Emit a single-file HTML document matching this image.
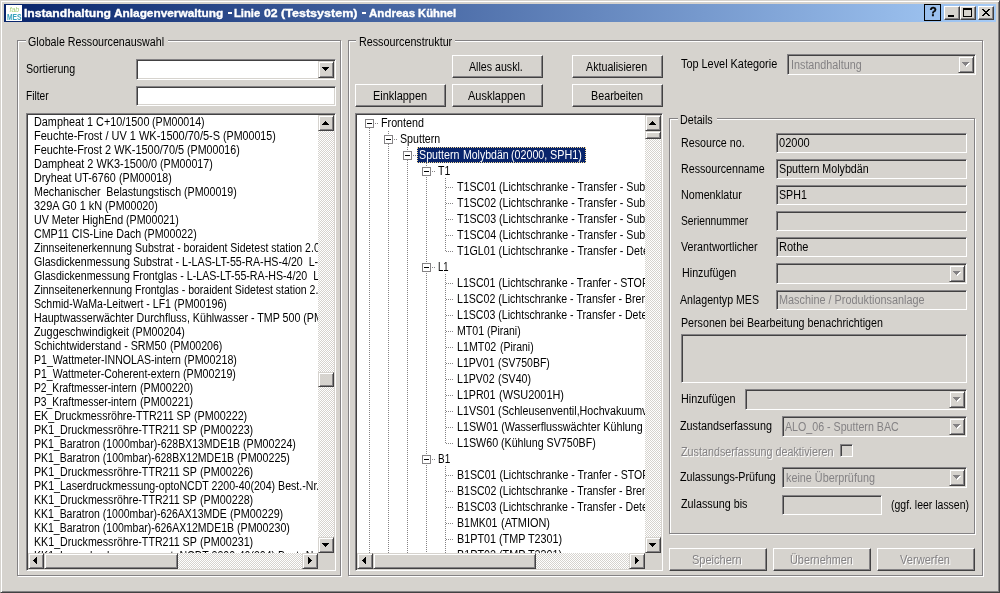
<!DOCTYPE html>
<html><head><meta charset="utf-8"><title>Instandhaltung Anlagenverwaltung</title>
<style>
html,body{margin:0;padding:0}
body{width:1000px;height:593px;background:#d6d3ce;position:relative;overflow:hidden;font-family:"Liberation Sans",sans-serif;font-size:12px;color:#000}
#w{position:absolute;left:0;top:0;width:1000px;height:593px;will-change:transform;-webkit-font-smoothing:antialiased}
.a{position:absolute;box-sizing:border-box}
.t{position:absolute;white-space:pre;transform-origin:0 0;transform:scaleX(0.885);line-height:14px;height:14px}
.dis{color:#848284;text-shadow:1px 1px 0 #fff}
.gry{color:#848284}
.sunk{position:absolute;box-sizing:border-box;border:1px solid;border-color:#848284 #fff #fff #848284;box-shadow:inset 1px 1px 0 #424142,inset -1px -1px 0 #d6d3ce}
.btn{position:absolute;box-sizing:border-box;border:1px solid;border-color:#fff #424142 #424142 #fff;box-shadow:inset -1px -1px 0 #848284;background:#d6d3ce}
.sbtn{position:absolute;box-sizing:border-box;border:1px solid;border-color:#d6d3ce #424142 #424142 #d6d3ce;box-shadow:inset 1px 1px 0 #fff,inset -1px -1px 0 #848284;background:#d6d3ce}
.grp{position:absolute;box-sizing:border-box;border:1px solid #848284;box-shadow:1px 1px 0 #fff,inset 1px 1px 0 #fff}
.glab{position:absolute;background:#d6d3ce;height:14px}
.trk{position:absolute;background:conic-gradient(#fff 25%,#d6d3ce 0 50%,#fff 0 75%,#d6d3ce 0) 0 0/2px 2px}
.clip{position:absolute;overflow:hidden;background:#fff}
.vd{position:absolute;width:1px;background:repeating-linear-gradient(to bottom,#848284 0 1px,transparent 1px 2px)}
.hd{position:absolute;height:1px;background:repeating-linear-gradient(to right,#848284 0 1px,transparent 1px 2px)}
.box{position:absolute;width:9px;height:9px;box-sizing:border-box;border:1px solid #848284;background:#fff}
.box:after{content:"";position:absolute;left:1px;top:3px;width:5px;height:1px;background:#000}
svg{position:absolute;overflow:visible}
</style></head>
<body>
<div id="w">
<div class="a" style="left:0;top:0;width:1000px;height:593px;border:1px solid;border-color:#d6d3ce #424142 #424142 #d6d3ce;box-shadow:inset 1px 1px 0 #fff,inset -1px -1px 0 #848284"></div>
<div class="a" style="left:4px;top:4px;width:992px;height:18px;background:linear-gradient(to right,#08246b,#a5cbf7)"></div>
<div class="a" style="left:6px;top:5px;width:16px;height:16px;background:#fff"></div>
<div class="t" style="left:9.5px;top:5.5px;font-size:7px;line-height:8px;height:8px;color:#a2cf78;font-style:italic;transform:none">fab</div>
<div class="t" style="left:7px;top:13px;font-size:8px;line-height:8px;height:8px;color:#38a3bd;font-weight:bold;transform:scaleX(.84) scaleY(1.1)">MES</div>
<div class="t" style="left:23.5px;top:6px;font-weight:bold;font-size:11px;color:#fff;-webkit-text-stroke:0.35px #fff;transform:scaleX(1.1038)">Instandhaltung</div>
<div class="t" style="left:114.1px;top:6px;font-weight:bold;font-size:11px;color:#fff;-webkit-text-stroke:0.35px #fff;transform:scaleX(1.0754)">Anlagenverwaltung</div>
<div class="t" style="left:234.2px;top:6px;font-weight:bold;font-size:11px;color:#fff;-webkit-text-stroke:0.35px #fff;transform:scaleX(1.0169)">Linie</div>
<div class="t" style="left:263.5px;top:6px;font-weight:bold;font-size:11px;color:#fff;-webkit-text-stroke:0.35px #fff;transform:scaleX(1.1116)">02</div>
<div class="t" style="left:281.1px;top:6px;font-weight:bold;font-size:11px;color:#fff;-webkit-text-stroke:0.35px #fff;transform:scaleX(1.1412)">(Testsystem)</div>
<div class="t" style="left:368.6px;top:6px;font-weight:bold;font-size:11px;color:#fff;-webkit-text-stroke:0.35px #fff;transform:scaleX(1.0497)">Andreas</div>
<div class="t" style="left:418.3px;top:6px;font-weight:bold;font-size:11px;color:#fff;-webkit-text-stroke:0.35px #fff;transform:scaleX(1.0249)">Kühnel</div>
<div class="a" style="left:228px;top:12px;width:4px;height:2px;background:#fff"></div>
<div class="a" style="left:362px;top:12px;width:4px;height:2px;background:#fff"></div>
<div class="a" style="left:924px;top:4px;width:17px;height:17px;border:1px solid #000"></div>
<div class="t" style="left:929.5px;top:5px;font-weight:bold;font-size:12px;-webkit-text-stroke:0.3px #000;transform:none">?</div>
<div class="btn" style="left:944px;top:6px;width:16px;height:14px;"></div>
<div class="btn" style="left:960px;top:6px;width:16px;height:14px;"></div>
<div class="btn" style="left:978px;top:6px;width:16px;height:14px;"></div>
<div class="a" style="left:948px;top:15px;width:6px;height:2px;background:#000"></div>
<div class="a" style="left:963px;top:8px;width:9px;height:9px;border:1px solid #000;border-top-width:2px"></div>
<svg style="left:982px;top:9px" width="8" height="7" shape-rendering="crispEdges"><path d="M0,0H2L4,2.5L6,0H8L5,3.5L8,7H6L4,4.5L2,7H0L3,3.5Z" fill="#000"/></svg>
<div class="grp" style="left:17px;top:40px;width:324px;height:536px;"></div>
<div class="glab" style="left:26px;top:34px;width:142px"></div>
<div class="t " style="left:28.0px;top:35px;transform:scaleX(0.8904);">Globale Ressourcenauswahl</div>
<div class="t " style="left:26.2px;top:62px;transform:scaleX(0.8886);">Sortierung</div>
<div class="t " style="left:26.2px;top:89px;transform:scaleX(0.8513);">Filter</div>
<div class="sunk" style="left:136px;top:59px;width:200px;height:21px;background:#fff;"></div>
<div class="sbtn" style="left:318px;top:61px;width:16px;height:17px;"></div>
<svg style="left:322px;top:67px" width="8" height="5" shape-rendering="crispEdges"><rect x="0" y="0" width="7" height="1" fill="#000"/><rect x="1" y="1" width="5" height="1" fill="#000"/><rect x="2" y="2" width="3" height="1" fill="#000"/><rect x="3" y="3" width="1" height="1" fill="#000"/></svg>
<div class="sunk" style="left:136px;top:86px;width:200px;height:20px;background:#fff;"></div>
<div class="sunk" style="left:26px;top:113px;width:310px;height:458px;background:#fff;"></div>
<div class="clip" style="left:28px;top:115px;width:290px;height:438px">
<div class="t " style="left:5.7px;top:0px;transform:scaleX(0.9033);">Dampheat 1 C+10/1500</div>
<div class="t " style="left:124.4px;top:0px;transform:scaleX(0.8861);">(PM00014)</div>
<div class="t " style="left:5.7px;top:14px;transform:scaleX(0.9149);">Feuchte-Frost / UV 1 WK-1500/70/5-S</div>
<div class="t " style="left:195.1px;top:14px;transform:scaleX(0.8878);">(PM00015)</div>
<div class="t " style="left:5.7px;top:28px;transform:scaleX(0.9111);">Feuchte-Frost 2 WK-1500/70/5</div>
<div class="t " style="left:159.1px;top:28px;transform:scaleX(0.8878);">(PM00016)</div>
<div class="t " style="left:5.7px;top:42px;transform:scaleX(0.9091);">Dampheat 2 WK3-1500/0</div>
<div class="t " style="left:132.1px;top:42px;transform:scaleX(0.8878);">(PM00017)</div>
<div class="t " style="left:5.7px;top:56px;transform:scaleX(0.8941);">Dryheat UT-6760</div>
<div class="t " style="left:90.7px;top:56px;transform:scaleX(0.8878);">(PM00018)</div>
<div class="t " style="left:5.7px;top:70px;transform:scaleX(0.8893);">Mechanischer  Belastungstisch</div>
<div class="t " style="left:156.1px;top:70px;transform:scaleX(0.8878);">(PM00019)</div>
<div class="t " style="left:5.7px;top:84px;transform:scaleX(0.9128);">329A G0 1 kN</div>
<div class="t " style="left:77.2px;top:84px;transform:scaleX(0.8878);">(PM00020)</div>
<div class="t " style="left:5.7px;top:98px;transform:scaleX(0.8916);">UV Meter HighEnd</div>
<div class="t " style="left:98.2px;top:98px;transform:scaleX(0.8878);">(PM00021)</div>
<div class="t " style="left:5.7px;top:112px;transform:scaleX(0.8897);">CMP11 CIS-Line Dach</div>
<div class="t " style="left:116.2px;top:112px;transform:scaleX(0.8878);">(PM00022)</div>
<div class="t " style="left:5.7px;top:126px;transform:scaleX(0.8759);">Zinnseitenerkennung Substrat - boraident Sidetest station 2.0 (PM00190)</div>
<div class="t " style="left:5.7px;top:140px;transform:scaleX(0.8883);">Glasdickenmessung Substrat - L-LAS-LT-55-RA-HS-4/20  L-LAS (PM00191)</div>
<div class="t " style="left:5.7px;top:154px;transform:scaleX(0.8876);">Glasdickenmessung Frontglas - L-LAS-LT-55-RA-HS-4/20  L-LAS (PM00192)</div>
<div class="t " style="left:5.7px;top:168px;transform:scaleX(0.8753);">Zinnseitenerkennung Frontglas - boraident Sidetest station 2.0 (PM00193)</div>
<div class="t " style="left:5.7px;top:182px;transform:scaleX(0.8805);">Schmid-WaMa-Leitwert - LF1</div>
<div class="t " style="left:146.0px;top:182px;transform:scaleX(0.8911);">(PM00196)</div>
<div class="t " style="left:5.7px;top:196px;transform:scaleX(0.8887);">Hauptwasserwächter Durchfluss, Kühlwasser - TMP 500 (PM00200)</div>
<div class="t " style="left:5.7px;top:210px;transform:scaleX(0.9014);">Zuggeschwindigkeit</div>
<div class="t " style="left:104.0px;top:210px;transform:scaleX(0.8911);">(PM00204)</div>
<div class="t " style="left:5.7px;top:224px;transform:scaleX(0.8949);">Schichtwiderstand - SRM50</div>
<div class="t " style="left:141.5px;top:224px;transform:scaleX(0.881);">(PM00206)</div>
<div class="t " style="left:5.7px;top:238px;transform:scaleX(0.8799);">P1_Wattmeter-INNOLAS-intern</div>
<div class="t " style="left:155.9px;top:238px;transform:scaleX(0.8911);">(PM00218)</div>
<div class="t " style="left:5.7px;top:252px;transform:scaleX(0.8745);">P1_Wattmeter-Coherent-extern</div>
<div class="t " style="left:155.0px;top:252px;transform:scaleX(0.8911);">(PM00219)</div>
<div class="t " style="left:5.7px;top:266px;transform:scaleX(0.8563);">P2_Kraftmesser-intern</div>
<div class="t " style="left:111.8px;top:266px;transform:scaleX(0.8962);">(PM00220)</div>
<div class="t " style="left:5.7px;top:280px;transform:scaleX(0.8563);">P3_Kraftmesser-intern</div>
<div class="t " style="left:111.8px;top:280px;transform:scaleX(0.8962);">(PM00221)</div>
<div class="t " style="left:5.7px;top:294px;transform:scaleX(0.8884);">EK_Druckmessröhre-TTR211 SP</div>
<div class="t " style="left:165.8px;top:294px;transform:scaleX(0.8962);">(PM00222)</div>
<div class="t " style="left:5.7px;top:308px;transform:scaleX(0.8888);">PK1_Druckmessröhre-TTR211 SP</div>
<div class="t " style="left:171.8px;top:308px;transform:scaleX(0.8962);">(PM00223)</div>
<div class="t " style="left:5.7px;top:322px;transform:scaleX(0.8749);">PK1_Baratron (1000mbar)-628BX13MDE1B</div>
<div class="t " style="left:215.0px;top:322px;transform:scaleX(0.8911);">(PM00224)</div>
<div class="t " style="left:5.7px;top:336px;transform:scaleX(0.8742);">PK1_Baratron (100mbar)-628BX12MDE1B</div>
<div class="t " style="left:209.0px;top:336px;transform:scaleX(0.8911);">(PM00225)</div>
<div class="t " style="left:5.7px;top:350px;transform:scaleX(0.8888);">PK1_Druckmessröhre-TTR211 SP</div>
<div class="t " style="left:171.8px;top:350px;transform:scaleX(0.8962);">(PM00226)</div>
<div class="t " style="left:5.7px;top:364px;transform:scaleX(0.8825);">PK1_Laserdruckmessung-optoNCDT 2200-40(204) Best.-Nr.4120101 (PM00227)</div>
<div class="t " style="left:5.7px;top:378px;transform:scaleX(0.8888);">KK1_Druckmessröhre-TTR211 SP</div>
<div class="t " style="left:171.8px;top:378px;transform:scaleX(0.8962);">(PM00228)</div>
<div class="t " style="left:5.7px;top:392px;transform:scaleX(0.8732);">KK1_Baratron (1000mbar)-626AX13MDE</div>
<div class="t " style="left:201.8px;top:392px;transform:scaleX(0.8962);">(PM00229)</div>
<div class="t " style="left:5.7px;top:406px;transform:scaleX(0.8742);">KK1_Baratron (100mbar)-626AX12MDE1B</div>
<div class="t " style="left:209.0px;top:406px;transform:scaleX(0.8911);">(PM00230)</div>
<div class="t " style="left:5.7px;top:420px;transform:scaleX(0.8888);">KK1_Druckmessröhre-TTR211 SP</div>
<div class="t " style="left:171.8px;top:420px;transform:scaleX(0.8962);">(PM00231)</div>
<div class="t " style="left:5.7px;top:434px;transform:scaleX(0.8825);">KK1_Laserdruckmessung-optoNCDT 2200-40(204) Best.-Nr.4120101 (PM00232)</div>
</div>
<div class="trk" style="left:318px;top:115px;width:16px;height:438px;"></div>
<div class="sbtn" style="left:318px;top:115px;width:16px;height:16px;"></div>
<svg style="left:322px;top:121px" width="8" height="5" shape-rendering="crispEdges"><rect x="3" y="0" width="1" height="1" fill="#000"/><rect x="2" y="1" width="3" height="1" fill="#000"/><rect x="1" y="2" width="5" height="1" fill="#000"/><rect x="0" y="3" width="7" height="1" fill="#000"/></svg>
<div class="sbtn" style="left:318px;top:537px;width:16px;height:16px;"></div>
<svg style="left:322px;top:543px" width="8" height="5" shape-rendering="crispEdges"><rect x="0" y="0" width="7" height="1" fill="#000"/><rect x="1" y="1" width="5" height="1" fill="#000"/><rect x="2" y="2" width="3" height="1" fill="#000"/><rect x="3" y="3" width="1" height="1" fill="#000"/></svg>
<div class="sbtn" style="left:318px;top:372px;width:16px;height:15px;"></div>
<div class="trk" style="left:28px;top:553px;width:290px;height:16px;"></div>
<div class="sbtn" style="left:28px;top:553px;width:16px;height:16px;"></div>
<svg style="left:33px;top:557px" width="5" height="8" shape-rendering="crispEdges"><rect x="0" y="3" width="1" height="1" fill="#000"/><rect x="1" y="2" width="1" height="3" fill="#000"/><rect x="2" y="1" width="1" height="5" fill="#000"/><rect x="3" y="0" width="1" height="7" fill="#000"/></svg>
<div class="sbtn" style="left:302px;top:553px;width:16px;height:16px;"></div>
<svg style="left:308px;top:557px" width="5" height="8" shape-rendering="crispEdges"><rect x="0" y="0" width="1" height="7" fill="#000"/><rect x="1" y="1" width="1" height="5" fill="#000"/><rect x="2" y="2" width="1" height="3" fill="#000"/><rect x="3" y="3" width="1" height="1" fill="#000"/></svg>
<div class="sbtn" style="left:44px;top:553px;width:134px;height:16px;"></div>
<div class="a" style="left:318px;top:553px;width:16px;height:16px;background:#d6d3ce;"></div>
<div class="grp" style="left:348px;top:40px;width:635px;height:536px;"></div>
<div class="glab" style="left:356px;top:34px;width:99px"></div>
<div class="t " style="left:358.7px;top:35px;transform:scaleX(0.8958);">Ressourcenstruktur</div>
<div class="btn" style="left:452px;top:55px;width:91px;height:23px;"></div>
<div class="t " style="left:469.4px;top:60px;transform:scaleX(0.8865);">Alles auskl.</div>
<div class="btn" style="left:572px;top:55px;width:91px;height:23px;"></div>
<div class="t " style="left:586.3px;top:60px;transform:scaleX(0.8908);">Aktualisieren</div>
<div class="btn" style="left:355px;top:84px;width:91px;height:23px;"></div>
<div class="t " style="left:372.7px;top:89px;transform:scaleX(0.9111);">Einklappen</div>
<div class="btn" style="left:452px;top:84px;width:91px;height:23px;"></div>
<div class="t " style="left:468.2px;top:89px;transform:scaleX(0.9153);">Ausklappen</div>
<div class="btn" style="left:572px;top:84px;width:91px;height:23px;"></div>
<div class="t " style="left:590.6px;top:89px;transform:scaleX(0.8976);">Bearbeiten</div>
<div class="sunk" style="left:355px;top:113px;width:308px;height:458px;background:#fff;"></div>
<div class="clip" style="left:357px;top:115px;width:288px;height:438px">
<div class="vd" style="left:12px;top:13px;height:440px"></div>
<div class="vd" style="left:31px;top:16px;height:4px"></div>
<div class="vd" style="left:31px;top:29px;height:440px"></div>
<div class="vd" style="left:50px;top:32px;height:4px"></div>
<div class="vd" style="left:50px;top:45px;height:440px"></div>
<div class="vd" style="left:69px;top:48px;height:440px"></div>
<div class="box" style="left:8px;top:4px"></div>
<div class="hd" style="left:18px;top:8px;width:4px"></div>
<div class="t " style="left:23.6px;top:1px;transform:scaleX(0.8953);">Frontend</div>
<div class="box" style="left:27px;top:20px"></div>
<div class="hd" style="left:37px;top:24px;width:4px"></div>
<div class="t " style="left:43.2px;top:17px;transform:scaleX(0.8862);">Sputtern</div>
<div class="box" style="left:46px;top:36px"></div>
<div class="hd" style="left:56px;top:40px;width:4px"></div>
<div class="a" style="left:60px;top:32px;width:169px;height:16px;background:#08246b;outline:1px dotted #f7db94;outline-offset:-1px"></div>
<div class="t " style="left:62.2px;top:33px;transform:scaleX(0.8912);color:#fff;">Sputtern </div>
<div class="t " style="left:105.6px;top:33px;transform:scaleX(0.876);color:#fff;">Molybdän </div>
<div class="t " style="left:154.1px;top:33px;transform:scaleX(0.8902);color:#fff;">(02000, </div>
<div class="t " style="left:193.3px;top:33px;transform:scaleX(0.8997);color:#fff;">SPH1)</div>
<div class="box" style="left:65px;top:52px"></div>
<div class="hd" style="left:75px;top:56px;width:4px"></div>
<div class="t " style="left:81.2px;top:49px;transform:scaleX(0.8712);">T1</div>
<div class="hd" style="left:89px;top:72px;width:8px"></div>
<div class="t " style="left:100.0px;top:65px;transform:scaleX(0.8876);">T1SC01 (Lichtschranke - Transfer - Substrat)</div>
<div class="hd" style="left:89px;top:88px;width:8px"></div>
<div class="t " style="left:100.0px;top:81px;transform:scaleX(0.8876);">T1SC02 (Lichtschranke - Transfer - Substrat)</div>
<div class="hd" style="left:89px;top:104px;width:8px"></div>
<div class="t " style="left:100.0px;top:97px;transform:scaleX(0.8876);">T1SC03 (Lichtschranke - Transfer - Substrat)</div>
<div class="hd" style="left:89px;top:120px;width:8px"></div>
<div class="t " style="left:100.0px;top:113px;transform:scaleX(0.8876);">T1SC04 (Lichtschranke - Transfer - Substrat)</div>
<div class="hd" style="left:89px;top:136px;width:8px"></div>
<div class="t " style="left:100.0px;top:129px;transform:scaleX(0.8907);">T1GL01 (Lichtschranke - Transfer - Detektion)</div>
<div class="box" style="left:65px;top:148px"></div>
<div class="hd" style="left:75px;top:152px;width:4px"></div>
<div class="t " style="left:81.2px;top:145px;transform:scaleX(0.7942);">L1</div>
<div class="hd" style="left:89px;top:168px;width:8px"></div>
<div class="t " style="left:100.0px;top:161px;transform:scaleX(0.8866);">L1SC01 (Lichtschranke - Tranfer - STOP)</div>
<div class="hd" style="left:89px;top:184px;width:8px"></div>
<div class="t " style="left:100.0px;top:177px;transform:scaleX(0.8833);">L1SC02 (Lichtschranke - Transfer - Bremsen)</div>
<div class="hd" style="left:89px;top:200px;width:8px"></div>
<div class="t " style="left:100.0px;top:193px;transform:scaleX(0.8833);">L1SC03 (Lichtschranke - Transfer - Detektion)</div>
<div class="hd" style="left:89px;top:216px;width:8px"></div>
<div class="t " style="left:100.0px;top:209px;transform:scaleX(0.8868);">MT01</div>
<div class="t " style="left:130.4px;top:209px;transform:scaleX(0.8688);">(Pirani)</div>
<div class="hd" style="left:89px;top:232px;width:8px"></div>
<div class="t " style="left:100.0px;top:225px;transform:scaleX(0.8928);">L1MT02</div>
<div class="t " style="left:142.5px;top:225px;transform:scaleX(0.8688);">(Pirani)</div>
<div class="hd" style="left:89px;top:248px;width:8px"></div>
<div class="t " style="left:100.0px;top:241px;transform:scaleX(0.8805);">L1PV01</div>
<div class="t " style="left:140.8px;top:241px;transform:scaleX(0.8727);">(SV750BF)</div>
<div class="hd" style="left:89px;top:264px;width:8px"></div>
<div class="t " style="left:100.0px;top:257px;transform:scaleX(0.8805);">L1PV02</div>
<div class="t " style="left:140.8px;top:257px;transform:scaleX(0.8835);">(SV40)</div>
<div class="hd" style="left:89px;top:280px;width:8px"></div>
<div class="t " style="left:100.0px;top:273px;transform:scaleX(0.8855);">L1PR01</div>
<div class="t " style="left:141.6px;top:273px;transform:scaleX(0.911);">(WSU2001H)</div>
<div class="hd" style="left:89px;top:296px;width:8px"></div>
<div class="t " style="left:100.0px;top:289px;transform:scaleX(0.8922);">L1VS01 (Schleusenventil,Hochvakuumventil)</div>
<div class="hd" style="left:89px;top:312px;width:8px"></div>
<div class="t " style="left:100.0px;top:305px;transform:scaleX(0.8942);">L1SW01 (Wasserflusswächter Kühlung SV)</div>
<div class="hd" style="left:89px;top:328px;width:8px"></div>
<div class="t " style="left:100.0px;top:321px;transform:scaleX(0.8952);">L1SW60</div>
<div class="t " style="left:144.4px;top:321px;transform:scaleX(0.8873);">(Kühlung SV750BF)</div>
<div class="box" style="left:65px;top:340px"></div>
<div class="hd" style="left:75px;top:344px;width:4px"></div>
<div class="t " style="left:81.2px;top:337px;transform:scaleX(0.8312);">B1</div>
<div class="hd" style="left:89px;top:360px;width:8px"></div>
<div class="t " style="left:100.0px;top:353px;transform:scaleX(0.8829);">B1SC01 (Lichtschranke - Tranfer - STOP)</div>
<div class="hd" style="left:89px;top:376px;width:8px"></div>
<div class="t " style="left:100.0px;top:369px;transform:scaleX(0.8803);">B1SC02 (Lichtschranke - Transfer - Bremsen)</div>
<div class="hd" style="left:89px;top:392px;width:8px"></div>
<div class="t " style="left:100.0px;top:385px;transform:scaleX(0.8803);">B1SC03 (Lichtschranke - Transfer - Detektion)</div>
<div class="hd" style="left:89px;top:408px;width:8px"></div>
<div class="t " style="left:100.0px;top:401px;transform:scaleX(0.8778);">B1MK01</div>
<div class="t " style="left:143.6px;top:401px;transform:scaleX(0.9113);">(ATMION)</div>
<div class="hd" style="left:89px;top:424px;width:8px"></div>
<div class="t " style="left:100.0px;top:417px;transform:scaleX(0.8995);">B1PT01</div>
<div class="t " style="left:142.2px;top:417px;transform:scaleX(0.8997);">(TMP T2301)</div>
<div class="hd" style="left:89px;top:440px;width:8px"></div>
<div class="t " style="left:100.0px;top:433px;transform:scaleX(0.8995);">B1PT02</div>
<div class="t " style="left:142.2px;top:433px;transform:scaleX(0.8997);">(TMP T2301)</div>
<div class="vd" style="left:88px;top:63px;height:74px"></div>
<div class="vd" style="left:88px;top:159px;height:170px"></div>
<div class="vd" style="left:88px;top:351px;height:106px"></div>
</div>
<div class="trk" style="left:645px;top:115px;width:16px;height:438px;"></div>
<div class="sbtn" style="left:645px;top:115px;width:16px;height:16px;"></div>
<svg style="left:649px;top:121px" width="8" height="5" shape-rendering="crispEdges"><rect x="3" y="0" width="1" height="1" fill="#000"/><rect x="2" y="1" width="3" height="1" fill="#000"/><rect x="1" y="2" width="5" height="1" fill="#000"/><rect x="0" y="3" width="7" height="1" fill="#000"/></svg>
<div class="sbtn" style="left:645px;top:537px;width:16px;height:16px;"></div>
<svg style="left:649px;top:543px" width="8" height="5" shape-rendering="crispEdges"><rect x="0" y="0" width="7" height="1" fill="#000"/><rect x="1" y="1" width="5" height="1" fill="#000"/><rect x="2" y="2" width="3" height="1" fill="#000"/><rect x="3" y="3" width="1" height="1" fill="#000"/></svg>
<div class="sbtn" style="left:645px;top:131px;width:16px;height:8px;"></div>
<div class="trk" style="left:357px;top:553px;width:288px;height:16px;"></div>
<div class="sbtn" style="left:357px;top:553px;width:16px;height:16px;"></div>
<svg style="left:362px;top:557px" width="5" height="8" shape-rendering="crispEdges"><rect x="0" y="3" width="1" height="1" fill="#000"/><rect x="1" y="2" width="1" height="3" fill="#000"/><rect x="2" y="1" width="1" height="5" fill="#000"/><rect x="3" y="0" width="1" height="7" fill="#000"/></svg>
<div class="sbtn" style="left:629px;top:553px;width:16px;height:16px;"></div>
<svg style="left:635px;top:557px" width="5" height="8" shape-rendering="crispEdges"><rect x="0" y="0" width="1" height="7" fill="#000"/><rect x="1" y="1" width="1" height="5" fill="#000"/><rect x="2" y="2" width="1" height="3" fill="#000"/><rect x="3" y="3" width="1" height="1" fill="#000"/></svg>
<div class="sbtn" style="left:373px;top:553px;width:163px;height:16px;"></div>
<div class="a" style="left:645px;top:553px;width:16px;height:16px;background:#d6d3ce;"></div>
<div class="t " style="left:681.4px;top:57px;transform:scaleX(0.9069);">Top Level Kategorie</div>
<div class="sunk" style="left:787px;top:54px;width:189px;height:21px;background:#d6d3ce;"></div>
<div class="sbtn" style="left:958px;top:56px;width:16px;height:17px;"></div>
<svg style="left:962px;top:62px" width="8" height="5" shape-rendering="crispEdges"><rect x="1" y="1" width="7" height="1" fill="#fff"/><rect x="2" y="2" width="5" height="1" fill="#fff"/><rect x="3" y="3" width="3" height="1" fill="#fff"/><rect x="4" y="4" width="1" height="1" fill="#fff"/><rect x="0" y="0" width="7" height="1" fill="#848284"/><rect x="1" y="1" width="5" height="1" fill="#848284"/><rect x="2" y="2" width="3" height="1" fill="#848284"/><rect x="3" y="3" width="1" height="1" fill="#848284"/></svg>
<div class="t gry" style="left:791.0px;top:58px;transform:scaleX(0.898);">Instandhaltung</div>
<div class="grp" style="left:669px;top:118px;width:306px;height:416px;"></div>
<div class="glab" style="left:678px;top:112px;width:39px"></div>
<div class="t " style="left:680.0px;top:113px;transform:scaleX(0.8915);">Details</div>
<div class="t " style="left:680.8px;top:136px;transform:scaleX(0.8911);">Resource no.</div>
<div class="sunk" style="left:776px;top:133px;width:191px;height:20px;"></div>
<div class="t " style="left:779.0px;top:136px;transform:scaleX(0.9201);">02000</div>
<div class="t " style="left:680.8px;top:162px;transform:scaleX(0.8889);">Ressourcenname</div>
<div class="sunk" style="left:776px;top:159px;width:191px;height:20px;"></div>
<div class="t " style="left:779.0px;top:162px;transform:scaleX(0.8905);">Sputtern Molybdän</div>
<div class="t " style="left:680.8px;top:188px;transform:scaleX(0.8938);">Nomenklatur</div>
<div class="sunk" style="left:776px;top:185px;width:191px;height:20px;"></div>
<div class="t " style="left:779.0px;top:188px;transform:scaleX(0.8868);">SPH1</div>
<div class="t " style="left:680.8px;top:214px;transform:scaleX(0.8539);">Seriennummer</div>
<div class="sunk" style="left:776px;top:211px;width:191px;height:20px;"></div>
<div class="t " style="left:680.8px;top:240px;transform:scaleX(0.8903);">Verantwortlicher</div>
<div class="sunk" style="left:776px;top:237px;width:191px;height:20px;"></div>
<div class="t " style="left:779.0px;top:240px;transform:scaleX(0.9182);">Rothe</div>
<div class="t " style="left:682.1px;top:266px;transform:scaleX(0.8945);">Hinzufügen</div>
<div class="sunk" style="left:776px;top:263px;width:191px;height:21px;background:#d6d3ce;"></div>
<div class="sbtn" style="left:949px;top:265px;width:16px;height:17px;"></div>
<svg style="left:953px;top:271px" width="8" height="5" shape-rendering="crispEdges"><rect x="1" y="1" width="7" height="1" fill="#fff"/><rect x="2" y="2" width="5" height="1" fill="#fff"/><rect x="3" y="3" width="3" height="1" fill="#fff"/><rect x="4" y="4" width="1" height="1" fill="#fff"/><rect x="0" y="0" width="7" height="1" fill="#848284"/><rect x="1" y="1" width="5" height="1" fill="#848284"/><rect x="2" y="2" width="3" height="1" fill="#848284"/><rect x="3" y="3" width="1" height="1" fill="#848284"/></svg>
<div class="t " style="left:680.4px;top:293px;transform:scaleX(0.8838);">Anlagentyp MES</div>
<div class="sunk" style="left:776px;top:290px;width:191px;height:20px;"></div>
<div class="t gry" style="left:779.2px;top:293px;transform:scaleX(0.9057);">Maschine / Produktionsanlage</div>
<div class="t " style="left:680.8px;top:316px;transform:scaleX(0.8901);">Personen bei Bearbeitung benachrichtigen</div>
<div class="sunk" style="left:681px;top:334px;width:286px;height:49px;"></div>
<div class="t " style="left:680.8px;top:392px;transform:scaleX(0.8994);">Hinzufügen</div>
<div class="sunk" style="left:745px;top:389px;width:222px;height:21px;background:#d6d3ce;"></div>
<div class="sbtn" style="left:949px;top:391px;width:16px;height:17px;"></div>
<svg style="left:953px;top:397px" width="8" height="5" shape-rendering="crispEdges"><rect x="1" y="1" width="7" height="1" fill="#fff"/><rect x="2" y="2" width="5" height="1" fill="#fff"/><rect x="3" y="3" width="3" height="1" fill="#fff"/><rect x="4" y="4" width="1" height="1" fill="#fff"/><rect x="0" y="0" width="7" height="1" fill="#848284"/><rect x="1" y="1" width="5" height="1" fill="#848284"/><rect x="2" y="2" width="3" height="1" fill="#848284"/><rect x="3" y="3" width="1" height="1" fill="#848284"/></svg>
<div class="t " style="left:680.1px;top:419px;transform:scaleX(0.9005);">Zustandserfassung</div>
<div class="sunk" style="left:782px;top:416px;width:185px;height:21px;background:#d6d3ce;"></div>
<div class="sbtn" style="left:949px;top:418px;width:16px;height:17px;"></div>
<svg style="left:953px;top:424px" width="8" height="5" shape-rendering="crispEdges"><rect x="1" y="1" width="7" height="1" fill="#fff"/><rect x="2" y="2" width="5" height="1" fill="#fff"/><rect x="3" y="3" width="3" height="1" fill="#fff"/><rect x="4" y="4" width="1" height="1" fill="#fff"/><rect x="0" y="0" width="7" height="1" fill="#848284"/><rect x="1" y="1" width="5" height="1" fill="#848284"/><rect x="2" y="2" width="3" height="1" fill="#848284"/><rect x="3" y="3" width="1" height="1" fill="#848284"/></svg>
<div class="t gry" style="left:785.0px;top:420px;transform:scaleX(0.8878);">ALO_06 - Sputtern BAC</div>
<div class="t dis" style="left:681.3px;top:445px;transform:scaleX(0.8966);">Zustandserfassung deaktivieren</div>
<div class="sunk" style="left:840px;top:444px;width:13px;height:13px;"></div>
<div class="t " style="left:680.1px;top:470px;transform:scaleX(0.8921);">Zulassungs-Prüfung</div>
<div class="sunk" style="left:782px;top:467px;width:185px;height:21px;background:#d6d3ce;"></div>
<div class="sbtn" style="left:949px;top:469px;width:16px;height:17px;"></div>
<svg style="left:953px;top:475px" width="8" height="5" shape-rendering="crispEdges"><rect x="1" y="1" width="7" height="1" fill="#fff"/><rect x="2" y="2" width="5" height="1" fill="#fff"/><rect x="3" y="3" width="3" height="1" fill="#fff"/><rect x="4" y="4" width="1" height="1" fill="#fff"/><rect x="0" y="0" width="7" height="1" fill="#848284"/><rect x="1" y="1" width="5" height="1" fill="#848284"/><rect x="2" y="2" width="3" height="1" fill="#848284"/><rect x="3" y="3" width="1" height="1" fill="#848284"/></svg>
<div class="t gry" style="left:785.9px;top:471px;transform:scaleX(0.9005);">keine Überprüfung</div>
<div class="t " style="left:681.3px;top:497px;transform:scaleX(0.8969);">Zulassung bis</div>
<div class="sunk" style="left:782px;top:495px;width:100px;height:20px;"></div>
<div class="t " style="left:890.9px;top:498px;transform:scaleX(0.8727);">(ggf. leer lassen)</div>
<div class="btn" style="left:669px;top:548px;width:98px;height:23px;"></div>
<div class="t dis" style="left:692.4px;top:553px;transform:scaleX(0.9179);">Speichern</div>
<div class="btn" style="left:773px;top:548px;width:98px;height:23px;"></div>
<div class="t dis" style="left:790.4px;top:553px;transform:scaleX(0.9067);">Übernehmen</div>
<div class="btn" style="left:877px;top:548px;width:98px;height:23px;"></div>
<div class="t dis" style="left:900.2px;top:553px;transform:scaleX(0.9254);">Verwerfen</div>
</div>
</body></html>
